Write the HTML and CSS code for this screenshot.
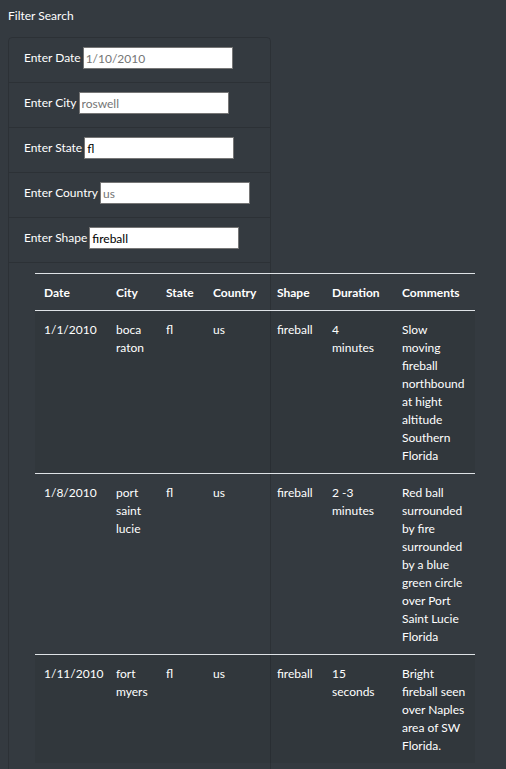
FILE: index.html
```html
<!DOCTYPE html>
<html lang="en">
<head>
<meta charset="utf-8">
<title>UFO Sightings</title>
<link rel="stylesheet" href="styles.css">
</head>
<body>
<div class="page-title">Filter Search</div>
<div class="filter-card">
  <ul class="filter-list">
    <li class="filter-item"><label for="datetime">Enter Date</label><input id="datetime" class="filter-input" type="text" placeholder="1/10/2010"></li>
    <li class="filter-item"><label for="city">Enter City</label><input id="city" class="filter-input" type="text" placeholder="roswell"></li>
    <li class="filter-item"><label for="state">Enter State</label><input id="state" class="filter-input" type="text" value="fl"></li>
    <li class="filter-item"><label for="country">Enter Country</label><input id="country" class="filter-input" type="text" placeholder="us"></li>
    <li class="filter-item"><label for="shape">Enter Shape</label><input id="shape" class="filter-input" type="text" value="fireball"></li>
  </ul>
  <table class="ufo-table">
    <colgroup>
      <col class="c-date"><col class="c-city"><col class="c-state"><col class="c-country"><col class="c-shape"><col class="c-duration"><col class="c-comments">
    </colgroup>
    <thead>
      <tr><th>Date</th><th>City</th><th>State</th><th>Country</th><th>Shape</th><th>Duration</th><th>Comments</th></tr>
    </thead>
    <tbody>
      <tr><td>1/1/2010</td><td>boca raton</td><td>fl</td><td>us</td><td>fireball</td><td class="duration">4 minutes</td><td>Slow moving fireball northbound at hight altitude Southern Florida</td></tr>
      <tr><td>1/8/2010</td><td>port saint lucie</td><td>fl</td><td>us</td><td>fireball</td><td class="duration">2 -3 minutes</td><td>Red ball surrounded by fire surrounded by a blue green circle over Port Saint Lucie Florida</td></tr>
      <tr><td>1/11/2010</td><td>fort myers</td><td>fl</td><td>us</td><td>fireball</td><td class="duration">15 seconds</td><td>Bright fireball seen over Naples area of SW Florida.</td></tr>
    </tbody>
  </table>
</div>
</body>
</html>
```
FILE: styles.css
```css
html, body {
  margin: 0;
  padding: 0;
}
body {
  background: #343a40;
  color: #ffffff;
  font-family: Lato, "Noto Sans", sans-serif;
  font-size: 12px;
  line-height: 18px;
  padding: 7px 8px 0 8px;
}
.page-title {
  height: 18px;
  margin-bottom: 12px;
}
.filter-card {
  width: 263px;
  box-sizing: border-box;
  border: 1px solid rgba(0, 0, 0, 0.15);
  border-radius: 4px;
  padding-bottom: 40px;
}
.filter-list {
  list-style: none;
  margin: 0;
  padding: 0;
}
.filter-item {
  display: flex;
  align-items: center;
  padding: 9px 15px 13px 15px;
  border-bottom: 1px solid rgba(0, 0, 0, 0.15);
}
.filter-item label {
  margin-right: 2px;
  white-space: nowrap;
}
.filter-input {
  width: 150px;
  height: 22px;
  box-sizing: border-box;
  border: 1px solid #767676;
  border-radius: 0;
  padding: 1px 2px;
  font-family: Lato, "Noto Sans", sans-serif;
  font-size: 12px;
  color: #000000;
  background: #ffffff;
  flex: none;
}
.filter-input::placeholder {
  color: #757575;
}
.ufo-table {
  margin: 10px 0 0 26px;
  width: 440px;
  table-layout: fixed;
  border-collapse: collapse;
}
.c-date { width: 72px; }
.c-city { width: 50px; }
.c-state { width: 47px; }
.c-country { width: 64px; }
.c-shape { width: 55px; }
.c-duration { width: 70px; }
.c-comments { width: 82px; }
.ufo-table th,
.ufo-table td {
  text-align: left;
  vertical-align: top;
  padding: 10px 9px 8px 9px;
  border-top: 1px solid #dee2e6;
}
.ufo-table td.duration {
  padding-right: 14px;
}
.ufo-table th {
  font-weight: 700;
}
.ufo-table tbody tr:nth-child(odd) {
  background: rgba(0, 0, 0, 0.05);
}
```
